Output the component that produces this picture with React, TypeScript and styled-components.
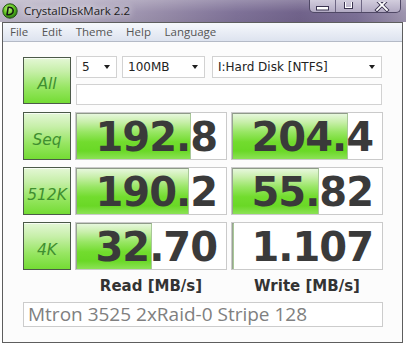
import React from "react";
import styled, { createGlobalStyle } from "styled-components";

const Global = createGlobalStyle`
  html, body { margin: 0; padding: 0; background: #ffffff; }
  #root { width: 406px; height: 346px; overflow: hidden; }
`;

const Window = styled.div`
  width: 406px;
  height: 346px;
  display: flex;
  flex-direction: column;
  background: #ffffff;
`;

const TitleBar = styled.div`
  height: 22px;
  flex: none;
  display: flex;
  align-items: flex-start;
  background:
    linear-gradient(to bottom, rgba(255, 255, 255, 0.22), rgba(255, 255, 255, 0) 55%, rgba(0, 0, 0, 0.04)),
    linear-gradient(to right, #bcb6c7 0%, #b0a8bf 20%, #978ca9 40%, #7f7298 58%, #71638b 74%, #7d7197 88%, #9f96b0 100%);
`;

const AppIcon = styled.svg`
  margin: 3px 0 0 2px;
  flex: none;
`;

const Title = styled.div`
  margin-left: 6px;
  font-family: "Open Sans", "Noto Sans", sans-serif;
  font-size: 11.5px;
  line-height: 22px;
  color: #1c1c1c;
  text-shadow: 0 0 6px rgba(255, 255, 255, 0.9), 0 0 10px rgba(255, 255, 255, 0.7);
`;

const CaptionGroup = styled.div`
  margin-left: auto;
  margin-right: 5px;
  height: 12px;
  display: flex;
  border: 1px solid #4f4865;
  border-top: none;
  border-radius: 0 0 5px 5px;
  background: linear-gradient(to bottom, #d2cddd, #b2aac3);
  overflow: hidden;
`;

const CaptionButton = styled.div<{ $w: number }>`
  width: ${(p) => p.$w}px;
  height: 12px;
  & + & {
    border-left: 1px solid #6d6683;
  }
`;

const Frame = styled.div`
  flex: 1;
  margin: 0 3px 3px 2px;
  border: 1px solid #5e5e5e;
  display: flex;
  flex-direction: column;
`;

const MenuBar = styled.div`
  height: 18px;
  flex: none;
  display: flex;
  align-items: center;
  gap: 13.5px;
  padding-left: 7px;
  border-bottom: 1px solid #b4bac6;
  background: linear-gradient(to bottom, #f6f8fc, #dde3ef);
`;

const MenuItem = styled.span`
  font-family: "Open Sans", "Noto Sans", sans-serif;
  font-size: 11.5px;
  color: #555555;
  line-height: 18px;
`;

const Client = styled.div`
  flex: 1;
  background: #fcfcfc;
  padding: 14px 0 15px 20px;
  display: grid;
  grid-template-columns: 48px 152px 152px;
  grid-template-rows: 49px 48px 48px 48px 18px 25px;
  column-gap: 4px;
  row-gap: 7px;
`;

const TestButton = styled.div<{ $first?: boolean }>`
  box-sizing: border-box;
  height: ${(p) => (p.$first ? 47 : 48)}px;
  align-self: ${(p) => (p.$first ? "center" : "stretch")};
  border: 1px solid #4c5a49;
  background: linear-gradient(to bottom, #e4f7d6 0%, #c6efa8 30%, #98e664 65%, #74dc34 100%);
  box-shadow: inset 0 1px 0 rgba(255, 255, 255, 0.7);
  display: flex;
  align-items: center;
  justify-content: center;
  padding-top: 7px;
  font-family: "DejaVu Sans", sans-serif;
  font-style: oblique;
  font-size: 15.5px;
  color: #3f8f30;
`;

const Controls = styled.div`
  grid-column: 2 / 4;
  margin: 0 1px;
  display: flex;
  flex-direction: column;
  gap: 6px;
`;

const SelectRow = styled.div`
  display: flex;
  height: 22px;
`;

const Select = styled.div<{ $w: number; $gap: number }>`
  box-sizing: border-box;
  width: ${(p) => p.$w}px;
  margin-right: ${(p) => p.$gap}px;
  height: 22px;
  border: 1px solid #d2d2d2;
  background: #ffffff;
  display: flex;
  align-items: center;
  padding: 0 6px 0 5px;
  font-family: "DejaVu Sans", sans-serif;
  font-size: 12px;
  color: #222222;
`;

const SelectText = styled.span`
  flex: 1;
`;

const Arrow = styled.span`
  width: 0;
  height: 0;
  border-left: 3.5px solid transparent;
  border-right: 3.5px solid transparent;
  border-top: 4px solid #1e1e1e;
`;

const Progress = styled.div`
  box-sizing: border-box;
  height: 21px;
  border: 1px solid #d2d2d2;
  background: #ffffff;
`;

const Result = styled.div`
  position: relative;
  box-sizing: border-box;
  border: 1px solid #cacaca;
  background: #ffffff;
  overflow: hidden;
`;

const Fill = styled.div`
  position: absolute;
  left: 0;
  top: 0;
  bottom: 0;
  box-sizing: border-box;
  border-top: 1px solid #8e9a88;
  border-left: 1px solid #98a492;
  border-right: 1px solid #a8c898;
  background: linear-gradient(to bottom, #e6f7dc 0%, #c8efaa 18%, #98e664 40%, #72dc2e 62%, #6ad826 82%, #8ce256 100%);
`;

const Value = styled.div`
  position: relative;
  text-align: right;
  padding: 2px 9px 0 0;
  font-family: "DejaVu Sans", sans-serif;
  font-weight: bold;
  font-size: 40px;
  letter-spacing: -1px;
  line-height: 44px;
  color: #3a3a3a;
`;

const ColumnLabel = styled.div`
  text-align: center;
  font-family: "DejaVu Sans", sans-serif;
  font-weight: bold;
  font-size: 15px;
  line-height: 18px;
  color: #333333;
`;

const Comment = styled.div`
  grid-column: 1 / 4;
  box-sizing: border-box;
  border: 1px solid #cccccc;
  background: #ffffff;
  padding-left: 4px;
  font-family: "Open Sans", "Noto Sans", sans-serif;
  font-size: 19px;
  line-height: 23px;
  color: #808080;
  white-space: nowrap;
  overflow: hidden;
`;

const rows = [
  { label: "Seq", read: "192.8", readPct: 76.5, write: "204.4", writePct: 77 },
  { label: "512K", read: "190.2", readPct: 75.5, write: "55.82", writePct: 58 },
  { label: "4K", read: "32.70", readPct: 50.5, write: "1.107", writePct: 1.2 },
];

function CellValue({ value, pct }: { value: string; pct: number }) {
  return (
    <Result>
      <Fill style={{ width: `${pct}%` }} />
      <Value>{value}</Value>
    </Result>
  );
}

export default function App() {
  return (
    <>
      <Global />
      <Window>
        <TitleBar>
          <AppIcon width="16" height="16" viewBox="0 0 16 16">
            <defs>
              <radialGradient id="cdmIcon" cx="40%" cy="35%" r="65%">
                <stop offset="0" stopColor="#c2f27c" />
                <stop offset="0.55" stopColor="#62c622" />
                <stop offset="1" stopColor="#2c7c12" />
              </radialGradient>
            </defs>
            <circle cx="8" cy="8" r="7.2" fill="url(#cdmIcon)" stroke="#234e14" strokeWidth="1" />
            <path
              d="M6.2 4.3 L5 11.6 C8.6 12.2 11.4 10.4 11.2 7.6 C11 5.2 8.8 4 6.2 4.3 Z"
              fill="none"
              stroke="#121812"
              strokeWidth="1.6"
              strokeLinejoin="round"
            />
          </AppIcon>
          <Title>CrystalDiskMark 2.2</Title>
          <CaptionGroup>
            <CaptionButton $w={25}>
              <svg width="25" height="12" viewBox="0 0 25 12">
                <rect x="6.5" y="4.5" width="12" height="3.5" fill="#ffffff" stroke="#3b3450" strokeWidth="1" />
              </svg>
            </CaptionButton>
            <CaptionButton $w={25}>
              <svg width="25" height="12" viewBox="0 0 25 12">
                <rect x="8.5" y="-2.5" width="8" height="9" fill="none" stroke="#3b3450" strokeWidth="1" />
                <rect x="9.5" y="-1.5" width="6" height="7" fill="none" stroke="#ffffff" strokeWidth="1" />
              </svg>
            </CaptionButton>
            <CaptionButton $w={38}>
              <svg width="38" height="12" viewBox="0 0 38 12">
                <path d="M15 -2 L25 8 M25 -2 L15 8" stroke="#3b3450" strokeWidth="3.6" strokeLinecap="square" />
                <path d="M15 -2 L25 8 M25 -2 L15 8" stroke="#ffffff" strokeWidth="1.8" strokeLinecap="square" />
              </svg>
            </CaptionButton>
          </CaptionGroup>
        </TitleBar>
        <Frame>
          <MenuBar>
            <MenuItem>File</MenuItem>
            <MenuItem>Edit</MenuItem>
            <MenuItem>Theme</MenuItem>
            <MenuItem>Help</MenuItem>
            <MenuItem>Language</MenuItem>
          </MenuBar>
          <Client>
            <TestButton $first>All</TestButton>
            <Controls>
              <SelectRow>
                <Select $w={41} $gap={5}>
                  <SelectText>5</SelectText>
                  <Arrow />
                </Select>
                <Select $w={83} $gap={7}>
                  <SelectText>100MB</SelectText>
                  <Arrow />
                </Select>
                <Select $w={170} $gap={0}>
                  <SelectText>I:Hard Disk [NTFS]</SelectText>
                  <Arrow />
                </Select>
              </SelectRow>
              <Progress />
            </Controls>
            {rows.map((r) => (
              <React.Fragment key={r.label}>
                <TestButton>{r.label}</TestButton>
                <CellValue value={r.read} pct={r.readPct} />
                <CellValue value={r.write} pct={r.writePct} />
              </React.Fragment>
            ))}
            <span />
            <ColumnLabel>Read [MB/s]</ColumnLabel>
            <ColumnLabel>Write [MB/s]</ColumnLabel>
            <Comment>Mtron 3525 2xRaid-0 Stripe 128</Comment>
          </Client>
        </Frame>
      </Window>
    </>
  );
}
